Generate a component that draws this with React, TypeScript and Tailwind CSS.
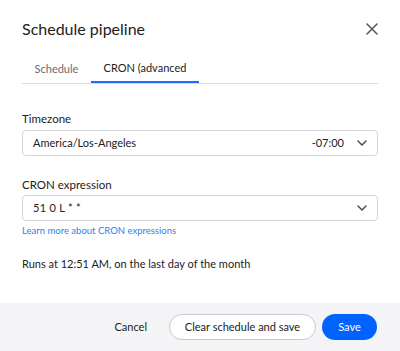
import React from "react";

function Chevron() {
  return (
    <svg width="12" height="12" viewBox="0 0 12 12" fill="none">
      <path d="M2 4l4 4 4-4" stroke="#444" strokeWidth="1.4" strokeLinecap="round" strokeLinejoin="round" />
    </svg>
  );
}

export default function App() {
  return (
    <div
      className="w-[400px] h-[351px] bg-white flex flex-col text-[#222]"
      style={{ fontFamily: "Lato, 'Noto Sans', sans-serif" }}
    >
      <div className="flex-1 px-[22px] pt-[17px] flex flex-col">
        <div className="flex items-center justify-between h-[24px]">
          <h1 className="text-[16px] leading-[24px] text-[#222]">Schedule pipeline</h1>
          <svg width="12" height="12" viewBox="0 0 12 12" className="mr-[0px]">
            <path d="M1 1l10 10M11 1L1 11" stroke="#555" strokeWidth="1.5" strokeLinecap="round" />
          </svg>
        </div>
        <div className="mt-[15px] flex border-b border-[#d9d9de]">
          <div className="h-[27px] w-[69px] flex items-center justify-center text-[11px] text-[#6b6b72]">Schedule</div>
          <div className="h-[27px] w-[108px] flex items-center justify-center text-[11px] text-[#222] border-b-2 border-[#1f6bff] -mb-px">
            CRON (advanced
          </div>
        </div>
        <div className="mt-[27px] text-[11.5px] leading-[16px] text-[#222]">Timezone</div>
        <div className="mt-[3px] h-[26px] rounded-[4px] border border-[#d4d4d9] flex items-center pl-[10px] pr-[9px] text-[11px]">
          <span className="flex-1">America/Los-Angeles</span>
          <span className="mr-[12px]">-07:00</span>
          <Chevron />
        </div>
        <div className="mt-[21px] text-[11.5px] leading-[16px] text-[#222]">CRON expression</div>
        <div className="mt-[2px] h-[26px] rounded-[4px] border border-[#d4d4d9] flex items-center pl-[10px] pr-[9px] text-[11px]">
          <span className="flex-1 tracking-[0.3px]">51 0 L * *</span>
          <Chevron />
        </div>
        <div className="mt-[3px] text-[9.5px] leading-[14px] text-[#2f80ed]">Learn more about CRON expressions</div>
        <div className="mt-[18px] text-[11px] leading-[16px] text-[#222]">
          Runs at 12:51 AM, on the last day of the month
        </div>
      </div>
      <div className="h-[48px] bg-[#f4f4f6] flex items-center justify-end pr-[23px]">
        <button className="text-[11px] text-[#222] mr-[22px]">Cancel</button>
        <button className="h-[26px] w-[147px] rounded-full border border-[#c9c9cf] bg-white text-[11px] text-[#222]">
          Clear schedule and save
        </button>
        <button className="ml-[6px] h-[26px] w-[55px] rounded-full bg-[#0062ff] text-white text-[11px]">Save</button>
      </div>
    </div>
  );
}
